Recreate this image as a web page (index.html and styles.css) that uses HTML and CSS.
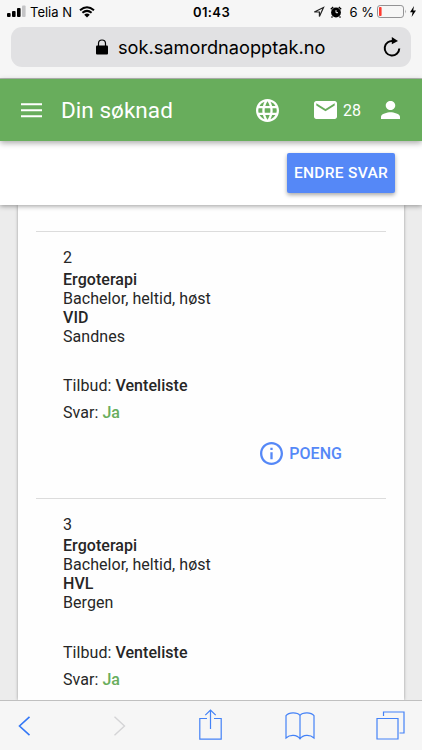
FILE: index.html
```html
<!DOCTYPE html>
<html lang="no">
<head>
    <meta charset="UTF-8">
    <meta name="viewport" content="width=device-width, initial-scale=1.0">
    <title>Din søknad</title>

    <link rel="stylesheet" href="styles.css">
</head>
<body>

    <!-- Browser top -->
    <div class="browser-top">
        <div class="status-bar">
            <div class="status-left">
                <svg class="signal" width="19" height="12" viewBox="0 0 19 12">
                    <rect x="0" y="8" width="3.6" height="4" rx="1"/>
                    <rect x="5" y="6" width="3.6" height="6" rx="1"/>
                    <rect x="10" y="3" width="3.6" height="9" rx="1"/>
                    <rect x="15" y="0.5" width="3.6" height="11.5" rx="1" fill="#c4c4c6"/>
                </svg>
                <span class="carrier">Telia N</span>
                <svg class="wifi" width="16" height="12" viewBox="0 0 16 12">
                    <path d="M1 4.3Q8-1.9 15 4.3M3.4 6.8Q8 2.9 12.6 6.8" fill="none" stroke="#000" stroke-width="2"/>
                    <path d="M5.2 8.8Q8 6.4 10.8 8.8L8 11.6z"/>
                </svg>
            </div>
            <div class="clock">01:43</div>
            <div class="status-right">
                <svg width="12" height="12" viewBox="0 0 12 12">
                    <path d="M1.3 6L10.5 1.5 6.4 10.6V6z" fill="none" stroke="#222" stroke-width="1.2"/>
                </svg>
                <svg class="alarm" width="12" height="12" viewBox="0 0 12 12">
                    <circle cx="6" cy="6.5" r="4.9"/>
                    <path d="M.8 3.2L3.2 1M11.2 3.2L8.8 1M2.5 10.5l-1 1M9.5 10.5l1 1" stroke="#000" stroke-width="1.3"/>
                    <path d="M6 4.2v2.5h2" fill="none" stroke="#f6f6f6" stroke-width="1"/>
                </svg>
                <span class="percent">6 %</span>
                <svg class="battery" width="31" height="13" viewBox="0 0 31 13">
                    <rect x=".5" y=".5" width="26" height="12" rx="2.6" fill="none" stroke="#929294"/>
                    <rect x="2" y="2" width="2.6" height="9" rx=".8" fill="#ff3b30"/>
                    <path d="M28.3 4.5q1.5 1.9 0 4z" fill="#929294"/>
                </svg>
                <svg class="bolt" width="6" height="11" viewBox="0 0 6 11">
                    <path d="M4 0L0 6.2h2.6L1.6 11 6 4.5H3.2z"/>
                </svg>
            </div>
        </div>

        <div class="address-bar">
            <svg class="lock" width="12" height="16" viewBox="0 0 12 16">
                <rect x="0" y="6.6" width="12" height="9" rx="1"/>
                <path d="M2.5 7V4.5a3.5 3.5 0 0 1 7 0V7" fill="none" stroke="#000" stroke-width="1.2"/>
            </svg>
            <span class="url">sok.samordnaopptak.no</span>
            <svg class="reload" width="18" height="20" viewBox="0 0 18 20">
                <path d="M10.5 4.1A7.3 7.3 0 1 0 16.3 11.5" fill="none" stroke="#000" stroke-width="2"/>
                <path d="M8.8 0L15 4 8.8 7.3z"/>
            </svg>
        </div>
    </div>

    <!-- Page header -->
    <header>
        <svg class="menu-icon" width="21" height="15" viewBox="0 0 21 15">
            <path d="M0 1.2h21M0 7.2h21M0 13.2h21" stroke="#fff" stroke-width="2.1"/>
        </svg>
        <h1>Din søknad</h1>
        <svg class="globe-icon" width="23" height="23" viewBox="2 2 20 20">
            <path fill="#fff" d="M11.99 2C6.47 2 2 6.48 2 12s4.47 10 9.99 10C17.52 22 22 17.52 22 12S17.52 2 11.99 2zm6.93 6h-2.95c-.32-1.25-.78-2.45-1.38-3.56 1.84.63 3.37 1.91 4.33 3.56zM12 4.04c.83 1.2 1.48 2.53 1.91 3.96h-3.82c.43-1.43 1.08-2.76 1.91-3.96zM4.26 14C4.1 13.36 4 12.69 4 12s.1-1.36.26-2h3.38c-.08.66-.14 1.32-.14 2s.06 1.34.14 2H4.26zm.82 2h2.95c.32 1.25.78 2.45 1.38 3.56-1.84-.63-3.37-1.9-4.33-3.56zm2.95-8H5.08c.96-1.66 2.49-2.93 4.33-3.56C8.81 5.55 8.35 6.75 8.03 8zM12 19.96c-.83-1.2-1.48-2.53-1.91-3.96h3.82c-.43 1.43-1.08 2.76-1.91 3.96zM14.34 14H9.66c-.09-.66-.16-1.32-.16-2s.07-1.35.16-2h4.68c.09.65.16 1.32.16 2s-.07 1.34-.16 2zm.25 5.56c.6-1.11 1.06-2.31 1.38-3.56h2.95c-.96 1.65-2.49 2.93-4.33 3.56zM16.36 14c.08-.66.14-1.32.14-2s-.06-1.34-.14-2h3.38c.16.64.26 1.31.26 2s-.1 1.36-.26 2h-3.38z"/>
        </svg>
        <svg class="mail-icon" width="23" height="18" viewBox="2 4 20 16" preserveAspectRatio="none">
            <path fill="#fff" d="M20 4H4c-1.1 0-1.99.9-1.99 2L2 18c0 1.1.9 2 2 2h16c1.1 0 2-.9 2-2V6c0-1.1-.9-2-2-2zm0 4l-8 5-8-5V6l8 5 8-5v2z"/>
        </svg>
        <span class="mail-count">28</span>
        <svg class="person-icon" width="19" height="18" viewBox="4 4 16 16" preserveAspectRatio="none">
            <path fill="#fff" d="M12 12c2.21 0 4-1.79 4-4s-1.79-4-4-4-4 1.79-4 4 1.79 4 4 4zm0 2c-2.67 0-8 1.34-8 4v2h16v-2c0-2.66-5.33-4-8-4z"/>
        </svg>
    </header>

    <div class="action-bar">
        <button class="edit-button">ENDRE SVAR</button>
    </div>

    <!-- Applications -->
    <main>
        <div class="card">
            <section class="choice">
                <div class="number">2</div>
                <div class="bold">Ergoterapi</div>
                <div>Bachelor, heltid, høst</div>
                <div class="bold">VID</div>
                <div>Sandnes</div>
                <div class="offer">Tilbud: <span class="bold">Venteliste</span></div>
                <div class="answer">Svar: <span class="yes">Ja</span></div>
                <div class="points">
                    <svg width="23" height="23" viewBox="2 2 20 20">
                        <path fill="#5588f7" d="M11 17h2v-6h-2v6zm1-15C6.48 2 2 6.48 2 12s4.48 10 10 10 10-4.48 10-10S17.52 2 12 2zm0 18c-4.41 0-8-3.59-8-8s3.59-8 8-8 8 3.59 8 8-3.59 8-8 8zM11 9h2V7h-2v2z"/>
                    </svg>
                    <span>POENG</span>
                </div>
            </section>

            <section class="choice">
                <div class="number">3</div>
                <div class="bold">Ergoterapi</div>
                <div>Bachelor, heltid, høst</div>
                <div class="bold">HVL</div>
                <div>Bergen</div>
                <div class="offer">Tilbud: <span class="bold">Venteliste</span></div>
                <div class="answer">Svar: <span class="yes">Ja</span></div>
            </section>
        </div>
    </main>

    <!-- Browser bottom -->
    <nav class="browser-bottom">
        <svg width="13" height="20" viewBox="0 0 13 20">
            <path d="M11.5 .8L1.5 10l10 9.2" fill="none" stroke="#3478f6" stroke-width="1.6"/>
        </svg>
        <svg class="forward" width="13" height="20" viewBox="0 0 13 20">
            <path d="M1.5 .8l10 9.2-10 9.2" fill="none" stroke="#d4d4d6" stroke-width="1.4"/>
        </svg>
        <svg class="share" width="23" height="31" viewBox="0 0 23 31">
            <path d="M8 9.5H.8v20.7h21.4V9.5H15M11.5 20V1M6.3 6.2L11.5 1l5.2 5.2" fill="none" stroke="#4482f7" stroke-width="1.2"/>
        </svg>
        <svg class="book" width="30" height="28" viewBox="0 0 30 28">
            <path d="M15 3.5C12.5.2 4-.2 1 3.7V26c4-3.7 11-3.5 14 .8C18 22.5 25 22.3 29 26V3.7C26-.2 17.5.2 15 3.5V27" fill="none" stroke="#4482f7" stroke-width="1.2"/>
        </svg>
        <svg class="tabs" width="29" height="29" viewBox="0 0 29 29">
            <path d="M1 7.5h21V28H1zM7.5 5V1H28v21h-4.5" fill="none" stroke="#4482f7" stroke-width="1.2"/>
        </svg>
    </nav>

</body>
</html>
```
FILE: styles.css
```css
/* General Styles */
* {
    box-sizing: border-box;
}

body {
    margin: 0;
    height: 750px;
    display: flex;
    flex-direction: column;
    overflow: hidden;
    font-family: Roboto, sans-serif;
    color: #262626;
    background-color: #ececec;
}

svg {
    display: block;
    flex-shrink: 0;
}

/* Browser Top */
.browser-top {
    height: 79px;
    flex-shrink: 0;
    background-color: #f6f6f6;
    border-bottom: 1px solid #b5b9b4;
    font-family: Inter, sans-serif;
    color: #000;
}

.status-bar {
    display: grid;
    grid-template-columns: 1fr auto 1fr;
    align-items: center;
    height: 23px;
    margin-bottom: 4px;
    padding: 0 6px 0 7px;
}

.status-left,
.status-right {
    display: flex;
    align-items: center;
}

.status-right {
    justify-content: flex-end;
}

.signal {
    margin-top: -1px;
}

.carrier {
    font-size: 13px;
    margin: 0 7px 0 4px;
}

.clock {
    font-size: 13px;
    font-weight: 600;
    letter-spacing: 0.4px;
}

.alarm {
    margin-left: 5px;
}

.percent {
    font-size: 13px;
    margin: 0 3px 0 8px;
}

.bolt {
    margin-left: 2px;
}

.address-bar {
    display: flex;
    align-items: center;
    height: 40px;
    margin: 0 11px;
    padding: 0 10px 0 85px;
    border-radius: 11px;
    background-color: #e1e1e3;
}

.url {
    font-size: 18.2px;
    margin-left: 10px;
}

.reload {
    margin-left: auto;
}

/* Header Styles */
header {
    display: flex;
    align-items: center;
    height: 62px;
    flex-shrink: 0;
    padding: 0 22px 0 21px;
    background-color: #68ad5c;
    color: white;
    position: relative;
    z-index: 2;
    box-shadow: 0 2px 6px rgba(0, 0, 0, 0.35);
}

h1 {
    margin: 0 auto 0 19px;
    font-size: 22.5px;
    font-weight: 400;
    letter-spacing: 0.05px;
}

.mail-icon {
    margin-left: 35px;
}

.mail-count {
    font-size: 16px;
    margin: 0 20px 0 6px;
}

.action-bar {
    display: flex;
    justify-content: flex-end;
    height: 64px;
    flex-shrink: 0;
    padding: 12px 27px 0 0;
    background-color: white;
    position: relative;
    z-index: 1;
    box-shadow: 0 1px 5px rgba(0, 0, 0, 0.4);
}

.edit-button {
    width: 108px;
    height: 40px;
    padding: 0 0 1px;
    border: none;
    border-radius: 2px;
    background-color: #5588f7;
    color: white;
    font-family: Roboto, sans-serif;
    font-size: 15.5px;
    font-weight: 500;
    letter-spacing: 0.3px;
    white-space: nowrap;
    box-shadow: 0 2px 4px rgba(0, 0, 0, 0.35);
}

/* Application List */
main {
    flex: 1;
    min-height: 0;
    overflow: hidden;
    padding: 0 18px;
}

.card {
    height: 100%;
    padding: 26px 18px 0;
    background-color: #fefefe;
    box-shadow: 0 0 3px rgba(0, 0, 0, 0.35);
}

.choice {
    height: 266.5px;
    padding: 16.4px 27px 0;
    border-top: 1px solid #dcdcdc;
    font-size: 16px;
    line-height: 19px;
    letter-spacing: 0.05px;
}

.number {
    margin-bottom: 2.6px;
}

.bold {
    font-weight: 500;
}

.offer {
    margin-top: 30.5px;
}

.answer {
    margin-top: 8px;
}

.yes {
    color: #68ad5c;
    font-weight: 500;
}

.points {
    display: flex;
    justify-content: flex-end;
    align-items: center;
    margin-top: 20px;
    padding-right: 17px;
    color: #5588f7;
    font-weight: 500;
}

.points span {
    margin-left: 6.5px;
}

/* Browser Bottom */
.browser-bottom {
    display: flex;
    align-items: center;
    height: 50px;
    flex-shrink: 0;
    padding: 0 17px 0 18px;
    background-color: #f6f6f6;
    border-top: 1px solid #c0c0c0;
}

.forward {
    margin-left: 82px;
}

.share {
    margin: 0 0 2px 73px;
}

.book {
    margin-left: 63px;
}

.tabs {
    margin: 0 0 1px auto;
}
```
